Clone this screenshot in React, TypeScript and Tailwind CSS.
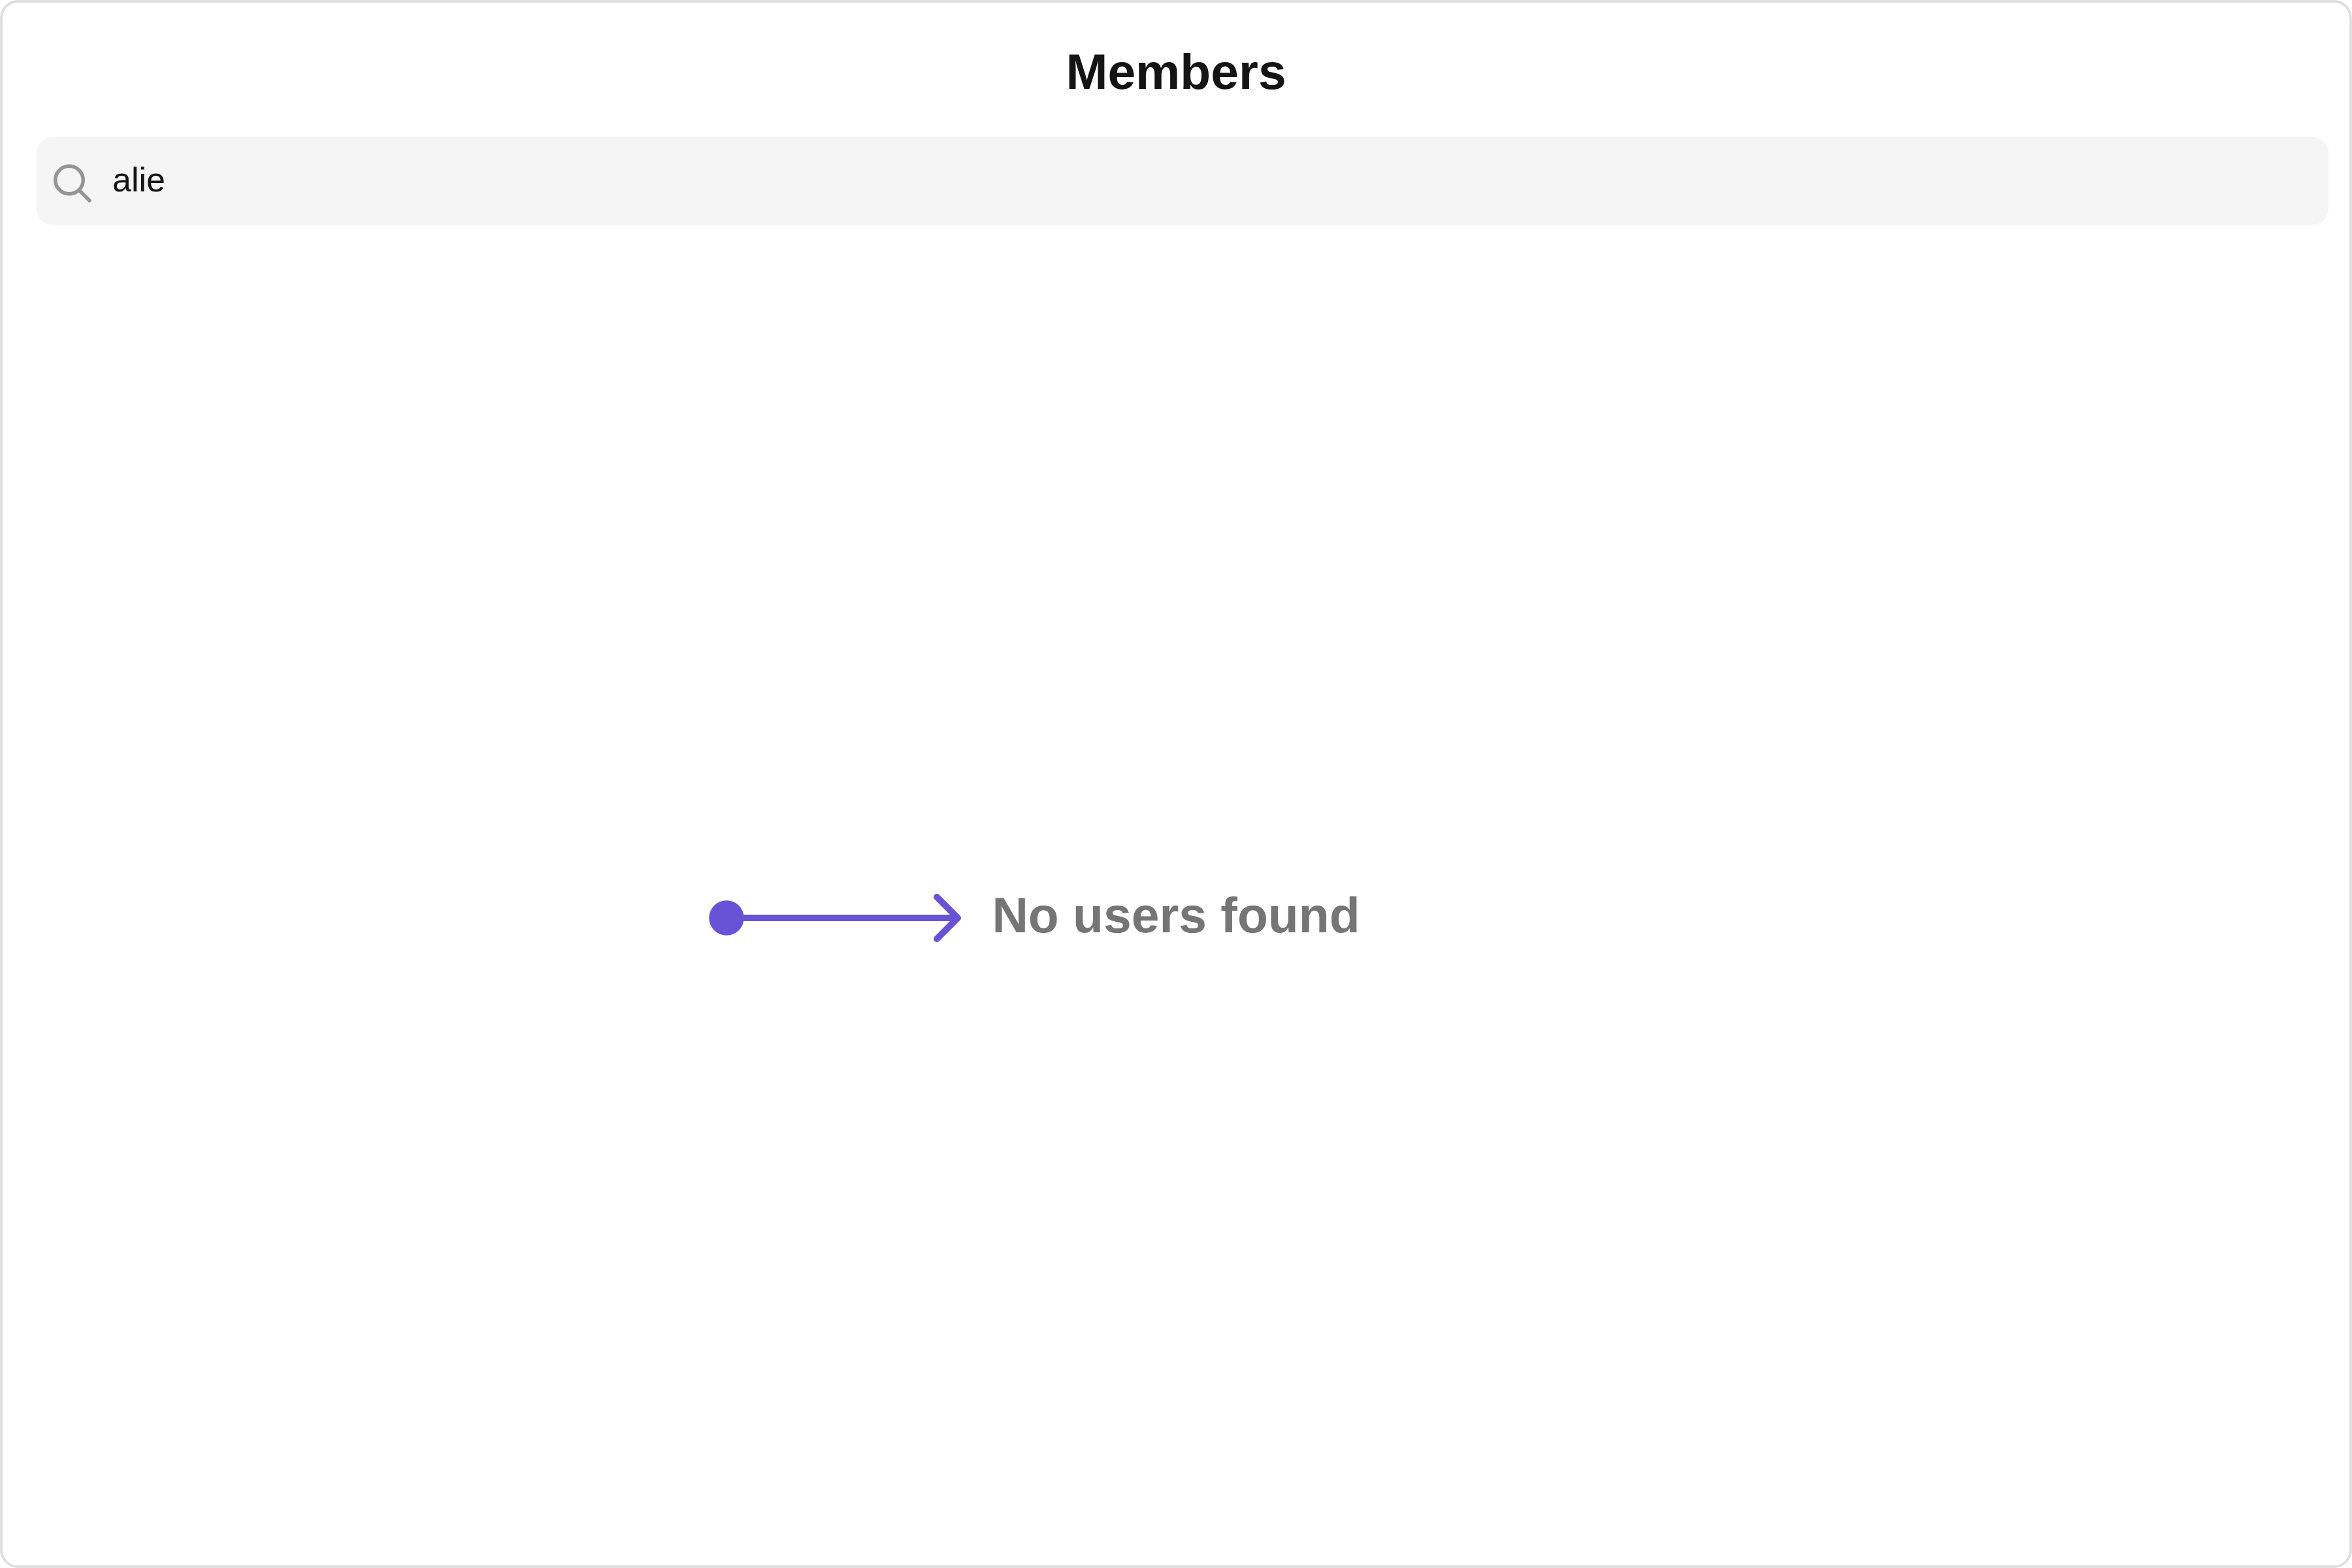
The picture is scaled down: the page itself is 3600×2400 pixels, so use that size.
export default function App() {
  return (
    <div className="w-[3600px] h-[2400px] bg-white border-4 border-[#e0e0e0] rounded-[28px] flex flex-col font-['Liberation_Sans',Arial,sans-serif]">
      <div className="h-[206px] pt-[60px] flex justify-center">
        <h1 className="text-[76.8px] leading-[90px] font-bold text-[#141414]">Members</h1>
      </div>
      <div className="ml-[52px] mr-[32px] h-[134px] bg-[#f5f5f5] rounded-[24px] flex items-center pl-[24px]">
        <svg width="64" height="64" viewBox="0 0 64 64" fill="none" className="shrink-0 overflow-visible">
          <circle cx="26" cy="30.5" r="21.25" stroke="#959595" strokeWidth="5.5" />
          <path d="M43 48 L57 62" stroke="#959595" strokeWidth="5.5" strokeLinecap="round" />
        </svg>
        <span className="ml-[28px] text-[52px] leading-[60px] text-[#141414] -mt-[4px]">alie</span>
      </div>
      <div className="flex-1 flex items-center justify-center">
        <div className="relative mt-[60px]">
          <svg width="390" height="94" viewBox="0 0 390 94" fill="none" className="absolute right-[calc(100%+46px)] top-[3px]">
            <circle cx="30" cy="47" r="26.7" fill="#6852d6" />
            <path d="M40 47 H384" stroke="#6852d6" strokeWidth="10" />
            <path d="M352 15 L384 47 L352 79" stroke="#6852d6" strokeWidth="10" strokeLinecap="round" strokeLinejoin="round" />
          </svg>
          <span className="block text-[76.8px] leading-[90px] font-bold text-[#757575]">No users found</span>
        </div>
      </div>
    </div>
  );
}
